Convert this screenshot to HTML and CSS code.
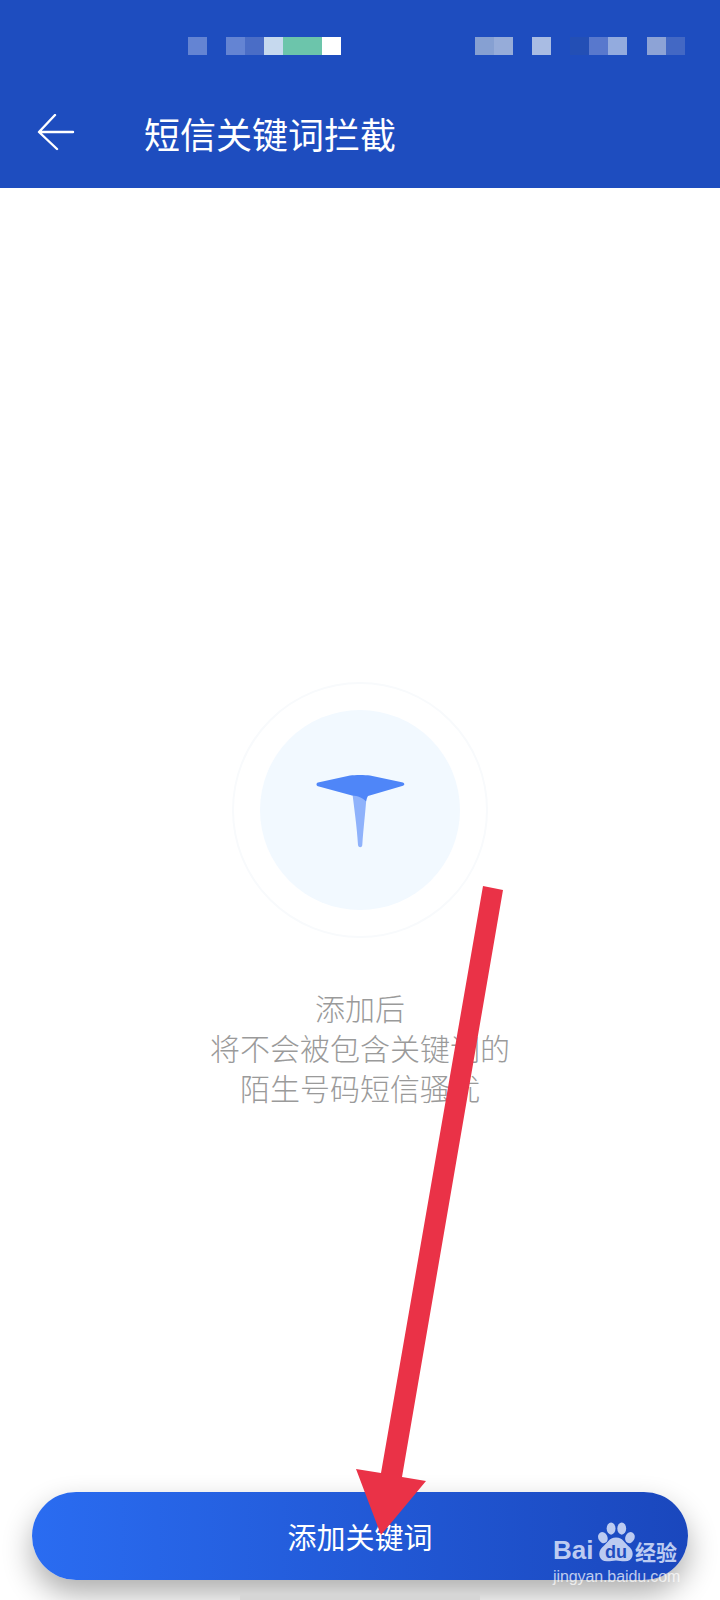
FILE: index.html
```html
<!DOCTYPE html>
<html lang="zh-CN">
<head>
<meta charset="utf-8">
<title>短信关键词拦截</title>
<link rel="stylesheet" href="styles.css">
</head>
<body>
<div class="page">
  <header class="header">
    <div class="status">
      <div class="cells cells-left">
        <i class="cell c-a"></i><i class="gap"></i><i class="cell c-a"></i><i class="cell c-b"></i><i class="cell c-c"></i><i class="cell cell-wide c-green"></i><i class="cell c-white"></i>
      </div>
      <div class="cells cells-right">
        <i class="cell c-d"></i><i class="cell c-e"></i><i class="gap"></i><i class="cell c-f"></i><i class="gap"></i><i class="cell c-g"></i><i class="cell c-h"></i><i class="cell c-i"></i><i class="gap-small"></i><i class="cell c-j"></i><i class="cell c-k"></i>
      </div>
    </div>
    <div class="titlebar">
      <svg class="back" width="38" height="38" viewBox="0 0 38 38" aria-hidden="true"><path d="M18 1 L2 18 H36 M2 18 L20 35" fill="none" stroke="#fff" stroke-width="2.4" stroke-linecap="round" stroke-linejoin="round"/></svg>
      <h1 class="title">短信关键词拦截</h1>
    </div>
  </header>
  <main class="main">
    <div class="ring">
      <div class="disc">
        <svg class="pin" width="90" height="76" viewBox="0 0 90 76" aria-hidden="true">
          <path d="M37 15 L52 15 C51 32 48.5 52 47.3 70 C47 73 43.5 73 43 70 C42 52 39 32 37 15 Z" fill="#8fb2fb"/>
          <path d="M3 7.6 L35 0.6 C40 -0.2 50 -0.2 55 0.6 L88 7.6 C89.8 8.4 89.8 10 88 10.8 L53 21 C52 22.5 51.5 24.5 51 26.5 C47.5 22.5 43 21 37 20.5 L3 11.2 C1 10.4 1 8.4 3 7.6 Z" fill="#4f86f8"/>
        </svg>
      </div>
    </div>
    <p class="hint">添加后<br>将不会被包含关键词的<br>陌生号码短信骚扰</p>
  </main>
  <footer class="footer">
    <button class="add" type="button">添加关键词</button>
    <div class="home"></div>
  </footer>
  <svg class="arrow" width="720" height="1600" viewBox="0 0 720 1600" aria-hidden="true">
    <path d="M483 886 L503 890 L402 1477 L426 1481 L381 1535 L356 1469 L381 1473 Z" fill="#ea3247"/>
  </svg>
  <div class="mark">
    <div class="mark-top">
      <span class="mark-bai">Bai</span>
      <span class="paw">
        <svg viewBox="0 0 46 50" aria-hidden="true">
          <ellipse cx="7" cy="19" rx="5.6" ry="7" transform="rotate(-25 7 19)"/>
          <ellipse cx="17" cy="8" rx="5.4" ry="7.4"/>
          <ellipse cx="30" cy="8" rx="5.4" ry="7.4"/>
          <ellipse cx="40" cy="19" rx="5.6" ry="7" transform="rotate(25 40 19)"/>
          <path d="M23 19 C32 19 33 26 40 31 C46 37 44 48 34 48 C29 48 27 47 23 47 C19 47 17 48 12 48 C2 48 0 37 6 31 C13 26 14 19 23 19 Z"/>
        </svg>
        <span class="paw-du">du</span>
      </span>
      <span class="mark-jy">经验</span>
    </div>
    <div class="mark-url">jingyan.baidu.com</div>
  </div>
</div>
</body>
</html>
```
FILE: styles.css
```css
* { box-sizing: border-box; }
html, body { margin: 0; padding: 0; background: #fff; }
body { font-family: "Noto Sans CJK SC", "Liberation Sans", sans-serif; }
.page {
  position: relative;
  width: 720px;
  height: 1600px;
  overflow: hidden;
  display: flex;
  flex-direction: column;
  background: #fff;
}
.header {
  height: 188px;
  flex: none;
  background: #1e4dbf;
  padding-top: 37px;
}
.status {
  display: flex;
  justify-content: space-between;
  height: 18px;
  padding: 0 35px 0 188px;
}
.cells { display: flex; }
.cell { display: block; width: 19px; height: 18px; }
.cell-wide { width: 39px; }
.gap { display: block; width: 19px; }
.gap-small { display: block; width: 20px; }
.c-a { background: #6484d3; }
.c-b { background: #4a6dc6; }
.c-c { background: #c6d9ee; }
.c-green { background: #6cc5ab; }
.c-white { background: #fff; }
.c-d { background: #86a0d2; }
.c-e { background: #96acd9; }
.c-f { background: #a9bce3; }
.c-g { background: #234fb5; }
.c-h { background: #5878cd; }
.c-i { background: #93abde; }
.c-j { background: #8da3d6; }
.c-k { background: #4368c4; }
.titlebar {
  display: flex;
  align-items: center;
  height: 48px;
  margin-top: 54px;
  padding-left: 37px;
}
.back { flex: none; }
.title {
  margin: 0 0 0 69px;
  font-size: 36px;
  line-height: 48px;
  font-weight: 400;
  color: #fff;
  white-space: nowrap;
}
.main {
  flex: 1;
  display: flex;
  flex-direction: column;
  align-items: center;
  padding-top: 494px;
}
.ring {
  width: 256px;
  height: 256px;
  border: 2px solid #f8fafc;
  border-radius: 50%;
  display: flex;
  align-items: center;
  justify-content: center;
}
.disc {
  width: 200px;
  height: 200px;
  border-radius: 50%;
  background: #f2f9ff;
  display: flex;
  justify-content: center;
  padding-top: 65px;
}
.pin { display: block; }
.hint {
  margin: 49px 0 0;
  font-size: 30px;
  line-height: 40px;
  font-weight: 300;
  color: #9a9a9a;
  text-align: center;
}
.footer {
  flex: none;
  padding: 0 32px;
}
.add {
  display: block;
  width: 100%;
  height: 88px;
  border: 0;
  padding: 0;
  border-radius: 44px;
  background: linear-gradient(90deg, #2a6cf1, #1a47bd);
  box-shadow: 0 14px 30px rgba(0, 0, 0, 0.32);
  color: #fff;
  font-family: inherit;
  font-size: 29px;
  font-weight: 400;
}
.home {
  width: 240px;
  height: 6px;
  margin: 14px auto 0;
  background: #d6d6d6;
  border-radius: 3px 3px 0 0;
  position: relative;
}
.arrow {
  position: absolute;
  left: 0;
  top: 0;
  pointer-events: none;
}
.mark {
  position: absolute;
  left: 553px;
  top: 1521px;
  width: 130px;
  color: #bccbf1;
}
.mark-top {
  display: flex;
  align-items: flex-end;
  height: 42px;
}
.mark-bai {
  font-family: "Liberation Sans", sans-serif;
  font-size: 26px;
  line-height: 26px;
  font-weight: 700;
  width: 44px;
}
.paw {
  position: relative;
  width: 38px;
  height: 41px;
  flex: none;
}
.paw svg {
  position: absolute;
  left: 0;
  top: 0;
  width: 38px;
  height: 41px;
  fill: #bccbf1;
}
.paw-du {
  position: absolute;
  left: 0;
  right: 0;
  bottom: 2px;
  text-align: center;
  font-family: "Liberation Sans", sans-serif;
  font-size: 18px;
  line-height: 18px;
  font-weight: 700;
  color: #1e4dbf;
}
.mark-jy {
  font-size: 21px;
  line-height: 24px;
  font-weight: 700;
  white-space: nowrap;
}
.mark-url {
  margin-top: 7px;
  font-family: "Liberation Sans", sans-serif;
  font-size: 16px;
  line-height: 14px;
  letter-spacing: -0.1px;
  color: rgba(255, 255, 255, 0.72);
  white-space: nowrap;
}
```
